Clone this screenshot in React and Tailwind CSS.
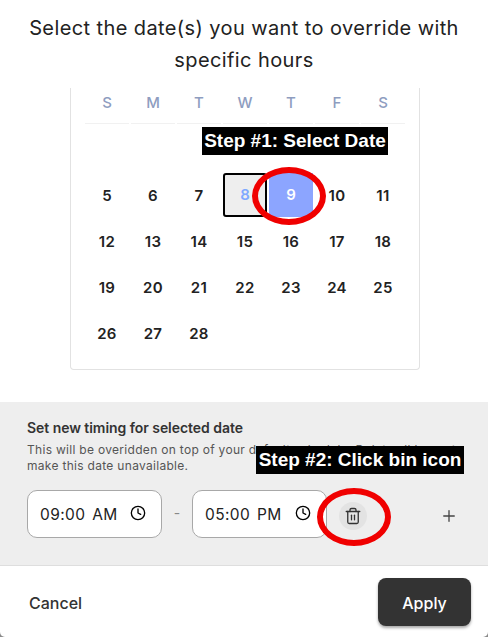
import { Clock, Trash2, Plus } from 'lucide-react';

const weekdays = ['S', 'M', 'T', 'W', 'T', 'F', 'S'];
const days = [
  '', '', '', '', '', '', '',
  5, 6, 7, 8, 9, 10, 11,
  12, 13, 14, 15, 16, 17, 18,
  19, 20, 21, 22, 23, 24, 25,
  26, 27, 28,
];

function DayCell({ day }) {
  if (day === 8) {
    return (
      <div className="m-px flex h-[44px] items-center justify-center rounded-[3px] border-2 border-black bg-[#eeeeee] pt-[1px] text-[15px] font-semibold text-[#7fa8ff]">
        {day}
      </div>
    );
  }
  if (day === 9) {
    return (
      <div className="m-px flex h-[44px] items-center justify-center bg-[#8ca5ff] pt-[1px] text-[15px] font-semibold text-white">
        {day}
      </div>
    );
  }
  return (
    <div className="flex h-[46px] items-center justify-center pt-[2px] text-[15px] font-semibold tracking-[0.3px] text-[#222222]">
      {day}
    </div>
  );
}

function TimeInput({ value }) {
  return (
    <div className="flex h-[48px] w-[135px] items-center justify-between rounded-[10px] border border-[#a8a8a8] bg-white pl-[12px] pr-[15px] text-[15.5px] tracking-[0.4px] text-[#222222]">
      <span className="pt-[1px] [word-spacing:2px]">{value}</span>
      <Clock size={16} strokeWidth={2} className="mb-[2px] text-black" />
    </div>
  );
}

export default function App() {
  return (
    <div className="h-[637px] w-[488px] bg-[#8a8a8a]">
      <div className="relative flex h-full w-full flex-col overflow-hidden rounded-b-[5px] bg-white font-['Inter',sans-serif]">
        <h1 className="px-[20px] pt-[12px] text-center text-[20px] font-normal leading-[32px] tracking-[0.4px] text-[#222222]">
          Select the date(s) you want to override with specific hours
        </h1>

        <div className="mx-[70px] mt-[12px] w-[350px] rounded-b-[4px] border-x border-b border-[#e2e2e2] px-[13px] pb-[13px]">
          <div className="grid grid-cols-[repeat(7,46px)]">
            {weekdays.map((d, i) => (
              <div
                key={i}
                className="mx-px flex h-[36px] items-center justify-center border-b border-[#f1f1f1] pb-[4px] text-[15px] font-medium text-[#8e9dbf]"
              >
                {d}
              </div>
            ))}
          </div>
          <div className="mt-[2px] grid grid-cols-[repeat(7,46px)]">
            {days.map((d, i) => (
              <DayCell key={i} day={d} />
            ))}
          </div>
        </div>

        <div className="mt-[32px] flex h-[164px] flex-col border-b border-[#dedede] bg-[#eeeeee] pl-[27px] pr-[16px] pt-[17px]">
          <p className="text-[14px] font-semibold leading-[17px] tracking-[-0.05px] text-[#333333]">
            Set new timing for selected date
          </p>
          <p className="mt-[6px] whitespace-nowrap text-[12px] leading-[16px] tracking-[0.3px] text-[#555555]">
            This will be overidden on top of your default schedule. Delete all hours to
            <br />
            make this date unavailable.
          </p>
          <div className="mt-[16px] flex items-center">
            <TimeInput value="09:00 AM" />
            <span className="mb-[4px] w-[30px] text-center text-[14px] text-[#888888]">-</span>
            <TimeInput value="05:00 PM" />
            <button className="ml-[12px] mt-[3px] flex h-[28px] w-[28px] items-center justify-center rounded-full bg-[#e3e3e3] text-[#333333]">
              <Trash2 size={18} strokeWidth={1.75} />
            </button>
            <Plus size={18} strokeWidth={1.75} className="ml-[73px] mt-[3px] text-[#444444]" />
          </div>
        </div>

        <div className="flex flex-1 items-center justify-between pl-[29px] pr-[17px]">
          <span className="pt-[2px] text-[16px] font-medium text-[#333333]">Cancel</span>
          <button className="h-[48px] w-[93px] rounded-[8px] bg-[#333333] pt-[2px] text-[16px] font-medium text-white shadow-[0_2px_3px_rgba(0,0,0,0.35)]">
            Apply
          </button>
        </div>

        {/* annotations pasted over the screenshot */}
        <div className="absolute left-[202px] top-[127px] flex h-[28px] w-[186px] items-center justify-center bg-black pt-[1px] font-['Liberation_Sans',sans-serif] text-[19px] font-bold text-white">
          Step #1: Select Date
        </div>
        <div className="absolute left-[256px] top-[446px] flex h-[28px] w-[208px] items-center justify-center bg-black pt-[1px] font-['Liberation_Sans',sans-serif] text-[19px] font-bold text-white">
          Step #2: Click bin icon
        </div>
        <div className="absolute left-[252px] top-[167px] h-[58px] w-[74px] rounded-[50%] border-[6px] border-[#f00000]" />
        <div className="absolute left-[317px] top-[488px] h-[58px] w-[74px] rounded-[50%] border-[6px] border-[#f00000]" />
      </div>
    </div>
  );
}
